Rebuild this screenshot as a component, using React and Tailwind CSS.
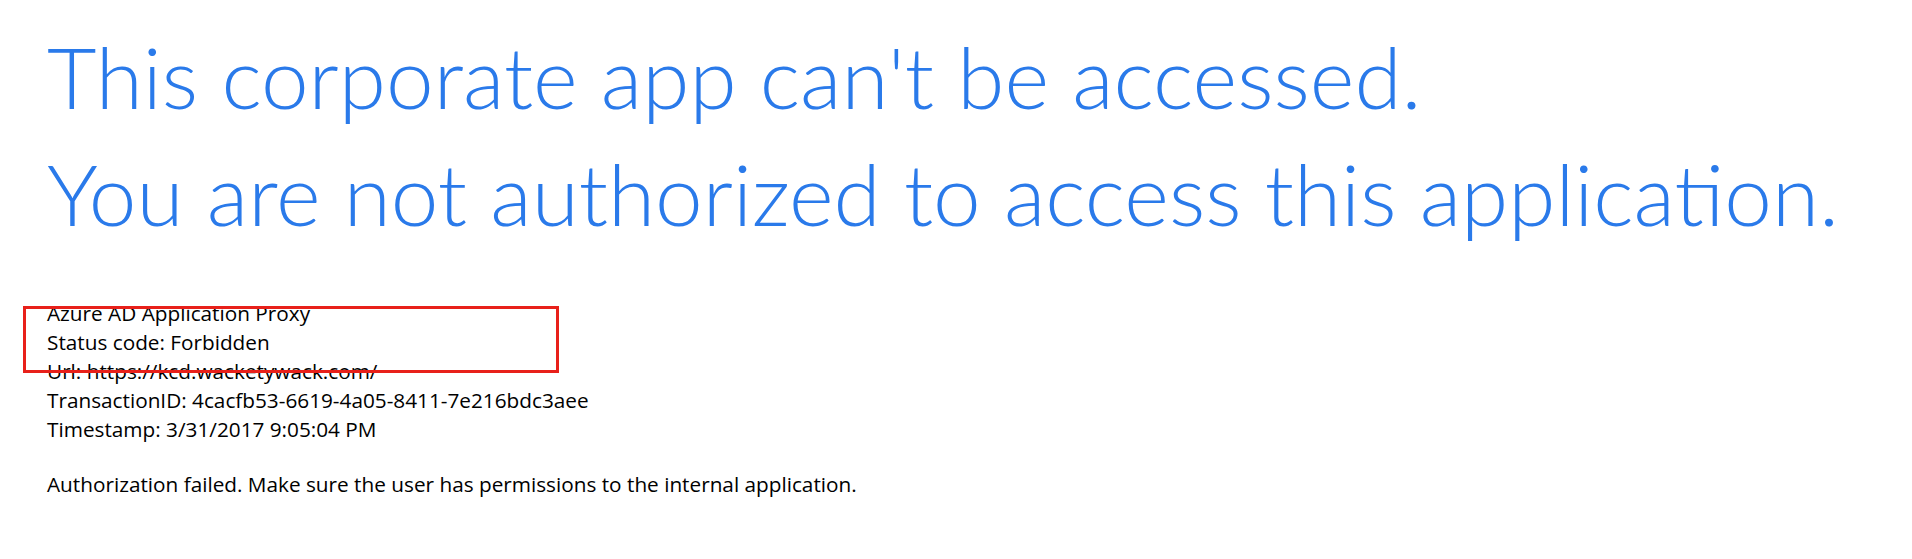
import React from 'react';

const details = [
  'Azure AD Application Proxy',
  'Status code: Forbidden',
  'Url: https://kcd.wacketywack.com/',
  'TransactionID: 4cacfb53-6619-4a05-8411-7e216bdc3aee',
  'Timestamp: 3/31/2017 9:05:04 PM',
];

const App = () => {
  return (
    <div className="min-h-[559px] bg-white">
      <div className="pl-[47px] pt-[17px]">
        <h1 className="font-['Lato',sans-serif] text-[85.5px] leading-[118px] font-light text-[#2a7aea] whitespace-nowrap">
          This corporate app can't be accessed.
        </h1>
        <h1 className="font-['Lato',sans-serif] text-[85.5px] leading-[116px] font-light text-[#2a7aea] whitespace-nowrap">
          You are not authorized to access this application.
        </h1>

        <div className="relative mt-[48px] font-['Open_Sans',sans-serif] text-[20.75px] leading-[29px] text-black">
          {details.map(line => (
            <div key={line}>{line}</div>
          ))}
          {/* annotation box drawn over the first lines */}
          <div className="absolute left-[-24px] top-[7px] w-[536px] h-[67px] border-[3px] border-[#e8201a]" />
        </div>

        <p className="mt-[26px] font-['Open_Sans',sans-serif] text-[20.75px] leading-[29px] text-black">
          Authorization failed. Make sure the user has permissions to the internal application.
        </p>
      </div>
    </div>
  );
};

export default App;
